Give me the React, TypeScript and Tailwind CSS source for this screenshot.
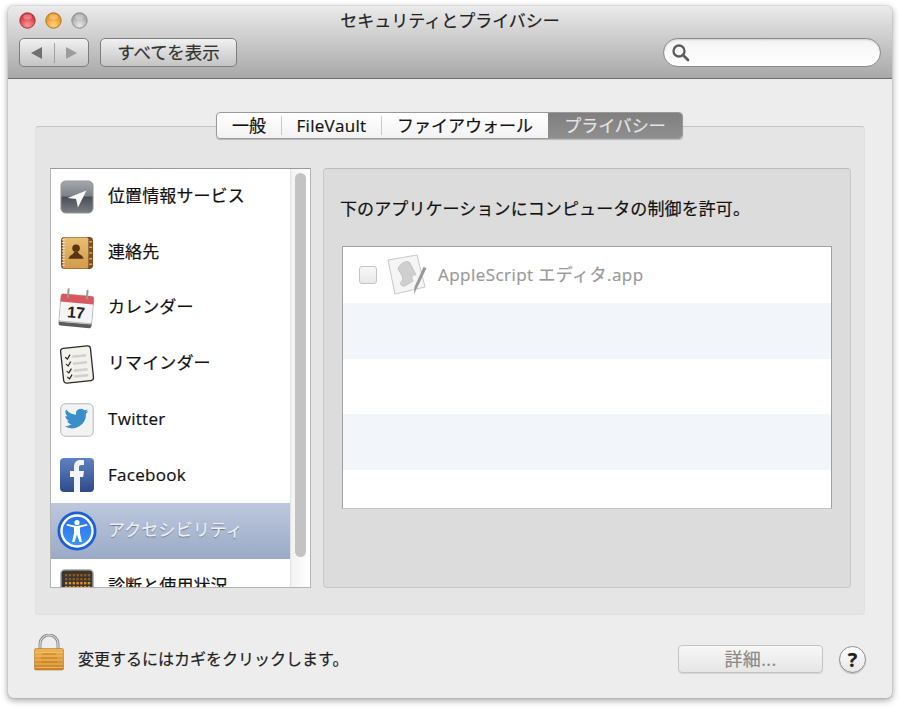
import type { ReactNode } from "react";

const font = "font-['Open_Sans','Noto_Sans_CJK_JP',sans-serif]";

function Light({ from, to, ring }: { from: string; to: string; ring: string }) {
  return (
    <svg width="17" height="17" viewBox="0 0 17 17">
      <defs>
        <radialGradient id={"l" + from.slice(1)} cx="50%" cy="80%" r="62%">
          <stop offset="0" stopColor={to} />
          <stop offset="1" stopColor={from} />
        </radialGradient>
      </defs>
      <circle cx="8.5" cy="8.5" r="7.7" fill={"url(#l" + from.slice(1) + ")"} stroke={ring} strokeWidth="1" />
      <ellipse cx="8.5" cy="4.800" rx="4.400" ry="2.600" fill="#fff" opacity=".3" />
    </svg>
  );
}

function LocationIcon() {
  return (
    <svg width="34" height="34" viewBox="0 0 36 36">
      <defs>
        <linearGradient id="loc" x1="0" y1="0" x2="0" y2="1">
          <stop offset="0" stopColor="#a4a7ac" />
          <stop offset=".47" stopColor="#7e8288" />
          <stop offset=".5" stopColor="#4a4e54" />
          <stop offset="1" stopColor="#7b7f85" />
        </linearGradient>
      </defs>
      <rect x="1" y="1" width="34" height="34" rx="5" fill="url(#loc)" stroke="#9a9a9a" />
      <path d="M28 11 L8 19 L17 20 L19 29 Z" fill="#f7f7f7" />
    </svg>
  );
}

function ContactsIcon() {
  return (
    <svg width="34" height="34" viewBox="0 0 36 36">
      <defs>
        <linearGradient id="con" x1="0" y1="0" x2="0" y2="1">
          <stop offset="0" stopColor="#e9bd74" />
          <stop offset="1" stopColor="#d39a4a" />
        </linearGradient>
      </defs>
      <rect x="1" y="1" width="34" height="34" rx="4" fill="#7b4f24" />
      <rect x="3" y="1.500" width="27" height="33" rx="2" fill="url(#con)" />
      <path d="M2 4h3M2 7h3M2 10h3M2 13h3M2 16h3M2 19h3M2 22h3M2 25h3M2 28h3M2 31h3" stroke="#eee" strokeWidth="1" />
      <path d="M31 6h3M31 12h3M31 18h3M31 24h3M31 30h3" stroke="#d9a860" strokeWidth="1.600" />
      <circle cx="17" cy="13" r="4" fill="#5a3514" />
      <path d="M9 24 C10 20 14 20 15 17 H19 C20 20 24 20 25 24 Z" fill="#5a3514" />
    </svg>
  );
}

function CalendarIcon() {
  return (
    <svg width="40" height="42" viewBox="0 0 40 42">
      <g transform="rotate(5 20 21)">
        <rect x="3" y="10" width="33" height="30" rx="2" fill="#5c5c5c" />
        <rect x="3" y="8" width="33" height="28" rx="2" fill="#f4f4f4" stroke="#aaa" strokeWidth=".5" />
        <path d="M3 35.500h33" stroke="#bbb" strokeWidth="1" />
        <path d="M3 10a2 2 0 0 1 2-2h29a2 2 0 0 1 2 2v6H3z" fill="#d9585f" />
        <path d="M10 3v8M29 3v8" stroke="#999" strokeWidth="2" strokeLinecap="round" />
        <text x="19.500" y="31" textAnchor="middle" fontSize="16" fontWeight="700" fontFamily="Liberation Sans, sans-serif" fill="#222">17</text>
      </g>
    </svg>
  );
}

function RemindersIcon() {
  const ys = [13, 20, 27, 33];
  return (
    <svg width="38" height="40" viewBox="0 0 38 40">
      <g transform="rotate(-6 19 20)">
        <rect x="4" y="3" width="30" height="35" rx="3" fill="#f2f1ea" stroke="#2a2a2a" strokeWidth="1.300" />
        {ys.map((y) => (
          <g key={y}>
            <path d={`M8 ${y - 1}l2 2 3-4`} fill="none" stroke="#222" strokeWidth="1.200" />
            <rect x="15" y={y - 2} width="14" height="2.500" fill="#d0d0d0" />
          </g>
        ))}
      </g>
    </svg>
  );
}

function TwitterIcon() {
  return (
    <svg width="34" height="34" viewBox="0 0 36 36">
      <rect x=".8" y=".8" width="34.400" height="34.400" rx="5" fill="#f2f2f2" stroke="#b4b4b4" />
      <path
        d="M30 8.500c-1 .5-2 .8-3 .9 1-.6 1.900-1.600 2.200-2.800-1 .6-2.100 1-3.200 1.200a5.200 5.200 0 0 0-8.900 4.700C12.800 12.300 9 10.200 6.400 7c-1.400 2.400-.7 5.400 1.600 7-.8 0-1.600-.2-2.300-.6 0 2.500 1.800 4.700 4.200 5.200-.8.200-1.600.2-2.400.1.700 2.100 2.600 3.600 4.900 3.600A10.500 10.500 0 0 1 4.700 24.400 14.800 14.800 0 0 0 27.500 11.300c1-.7 1.900-1.700 2.500-2.800z"
        fill="#3a8fcb"
      />
    </svg>
  );
}

function FacebookIcon() {
  return (
    <svg width="34" height="34" viewBox="0 0 34 34">
      <defs>
        <linearGradient id="fb" x1="0" y1="0" x2="0" y2="1">
          <stop offset="0" stopColor="#5f82c0" />
          <stop offset="1" stopColor="#2f4a8c" />
        </linearGradient>
      </defs>
      <rect width="34" height="34" rx="4" fill="url(#fb)" />
      <path d="M14 34V19h-4v-6h4v-4c0-4.500 2.500-7 6.500-7 1.500 0 3 .1 3.500.2V7h-2.500c-2 0-2.500 1-2.500 2.500V13h5l-.8 6H20v15z" fill="#f2f4f8" />
    </svg>
  );
}

function AccessIcon() {
  return (
    <svg width="40" height="40" viewBox="0 0 40 40">
      <defs>
        <linearGradient id="acc" x1="0" y1="0" x2="0" y2="1">
          <stop offset="0" stopColor="#2a6fe8" />
          <stop offset="1" stopColor="#3a96f7" />
        </linearGradient>
      </defs>
      <circle cx="20" cy="20" r="19.500" fill="#1c5fd0" />
      <circle cx="20" cy="20" r="15.500" fill="url(#acc)" stroke="#fff" strokeWidth="2.400" />
      <circle cx="20" cy="11.500" r="2.600" fill="#fff" />
      <path d="M9.500 14.500 L17 16.500 V22 L15 31 H17.500 L20 23.500 L22.500 31 H25 L23 22 V16.500 L30.500 14.500 L30 13 L20 15 L10 13 Z" fill="#fff" />
    </svg>
  );
}

function DiagIcon() {
  const cells = [];
  for (let r = 0; r < 5; r++) {
    for (let c = 0; c < 7; c++) {
      cells.push(<rect key={r + "-" + c} x={5 + c * 3.800} y={5 + r * 4} width="2.400" height="2.400" fill={r > 1 ? "#e0921e" : "#8a5a1e"} />);
    }
  }
  return (
    <svg width="34" height="36" viewBox="0 0 34 36">
      <rect x=".8" y=".8" width="32.400" height="34.400" rx="4" fill="#3a3530" stroke="#b8b8b8" strokeWidth="1.500" />
      {cells}
    </svg>
  );
}

function ScriptIcon() {
  return (
    <svg width="42" height="42" viewBox="0 0 42 42">
      <path d="M1 6 L30 1 L38 33 L8 40 Z" fill="#f5f5f5" stroke="#c8c8c8" />
      <path d="M11 15 C12 10 20 5 23 9 L29 21 C25 20 24 24 26 27 L18 32 C14 33 12 29 15 27 C17 24 14 20 11 15 Z" fill="#cfcfcf" stroke="#b0b0b0" strokeWidth=".6" />
      <path d="M39.500 14 L32 30 L27 40 L27.500 33 L36.500 13 Z" fill="#989898" />
    </svg>
  );
}

function LockIcon() {
  return (
    <svg width="30" height="37" viewBox="0 0 30 37">
      <defs>
        <linearGradient id="lk" x1="0" y1="0" x2="0" y2="1">
          <stop offset="0" stopColor="#f3b450" />
          <stop offset="1" stopColor="#c9811f" />
        </linearGradient>
      </defs>
      <path d="M6 15 V10 a9 9 0 0 1 18 0 V15" fill="none" stroke="#8f8f8f" strokeWidth="3" />
      <path d="M6 15 V10 a9 9 0 0 1 18 0 V15" fill="none" stroke="#e4e4e4" strokeWidth="1" />
      <rect x=".5" y="14.500" width="29" height="21.500" rx="1.500" fill="url(#lk)" stroke="#a87a3a" strokeWidth=".6" />
      <path d="M1 18.500h28M1 22h28M1 26h28M1 30h28M1 33.500h28" stroke="#f6c878" strokeWidth=".8" opacity=".9" />
      <path d="M8 20h14M7 24h16M7 28h16" stroke="#b87820" strokeWidth=".8" />
    </svg>
  );
}

const rows: { icon: ReactNode; label: string; latin?: boolean; selected?: boolean }[] = [
  { icon: <LocationIcon />, label: "位置情報サービス" },
  { icon: <ContactsIcon />, label: "連絡先" },
  { icon: <CalendarIcon />, label: "カレンダー" },
  { icon: <RemindersIcon />, label: "リマインダー" },
  { icon: <TwitterIcon />, label: "Twitter", latin: true },
  { icon: <FacebookIcon />, label: "Facebook", latin: true },
  { icon: <AccessIcon />, label: "アクセシビリティ", selected: true },
  { icon: <DiagIcon />, label: "診断と使用状況" },
];

const tabBtn = "my-[3px] flex items-center justify-center border-r border-[#c8c8c8] text-[17px] leading-[19px] text-[#111]";

export default function App() {
  return (
    <div className={`h-[708px] w-[900px] overflow-hidden bg-white pl-2 pt-[6px] [-webkit-text-stroke:0.2px] ${font}`}>
      <div className="flex h-[692px] w-[884px] flex-col overflow-hidden rounded-[5px] bg-[#ededed] shadow-[0_0_1px_#777,0_2px_7px_rgba(0,0,0,0.4)]">
        {/* title bar */}
        <div className="h-[73px] shrink-0 border-b border-[#6e6e6e] bg-gradient-to-b from-[#ebebeb] to-[#a8a8a8] px-[11px]">
          <div className="flex h-[32px] items-center pb-[3px]">
            <div className="flex w-[78px] gap-[9px]">
              <Light from="#d9323c" to="#ff9aa0" ring="#9b3a40" />
              <Light from="#e8951e" to="#ffd27a" ring="#a9752c" />
              <Light from="#a5a5a5" to="#e8e8e8" ring="#8c8c8c" />
            </div>
            <div className="flex-1 pr-[78px] text-center text-[17px] leading-[24px] text-[#222]">セキュリティとプライバシー</div>
          </div>
          <div className="flex items-center">
            <div className="flex h-[29px] w-[70px] items-center rounded-[5px] border border-[#7d7d7d] bg-gradient-to-b from-[#f1f1f1] to-[#c4c4c4]">
              <div className="flex flex-1 justify-center border-r border-[#a0a0a0] py-[3px]">
                <svg width="13" height="14" viewBox="0 0 13 14"><path d="M12 1 V13 L1 7 Z" fill="#707070" /></svg>
              </div>
              <div className="flex flex-1 justify-center py-[3px]">
                <svg width="13" height="14" viewBox="0 0 13 14"><path d="M1 1 V13 L12 7 Z" fill="#9c9c9c" /></svg>
              </div>
            </div>
            <div className="ml-[11px] flex h-[29px] w-[137px] items-center justify-center rounded-[5px] border border-[#7d7d7d] bg-gradient-to-b from-[#f1f1f1] to-[#c4c4c4] text-[17.500px] text-[#333]">
              すべてを表示
            </div>
            <div className="ml-auto flex h-[29px] w-[218px] items-center rounded-full border border-[#8a8a8a] bg-gradient-to-b from-[#f4f4f4] to-white pl-[7px] shadow-[inset_0_1px_2px_rgba(0,0,0,0.15)]">
              <svg width="19" height="19" viewBox="0 0 19 19">
                <circle cx="8" cy="8" r="5.500" fill="none" stroke="#5c5c5c" strokeWidth="2.300" />
                <path d="M12 12 L17 17" stroke="#5c5c5c" strokeWidth="2.800" strokeLinecap="round" />
              </svg>
            </div>
          </div>
        </div>

        {/* tabs */}
        <div className="relative z-10 ml-[208px] mt-[33px] flex h-[27px] w-[467px] overflow-hidden rounded-[4px] border border-[#9a9a9a] bg-gradient-to-b from-white to-[#f2f2f2] shadow-[0_1px_1px_rgba(0,0,0,0.2)]">
          <div className={`${tabBtn} w-[65px]`}>一般</div>
          <div className={`${tabBtn} w-[100px] tracking-[0.3px]`}>FileVault</div>
          <div className={`${tabBtn} w-[166px] border-r-0`}>ファイアウォール</div>
          <div className="flex h-full flex-1 items-center justify-center bg-gradient-to-b from-[#7f7f7f] to-[#8f8f8f] text-[17px] leading-[19px] text-[#e4e4e4]">プライバシー</div>
        </div>

        {/* panel */}
        <div className="mx-[27px] -mt-[13px] flex h-[489px] gap-[12px] rounded-[4px] border border-t-[#c4c4c4] border-x-[#e0e0e0] border-b-[#e0e0e0] bg-[#e5e5e5] pl-[14px] pr-[13px] pt-[41px]">
          <div className="flex h-[420px] w-[261px] overflow-hidden border border-[#b4b4b4] border-t-[#999] bg-white">
            <div className="h-full w-[239px] shrink-0 overflow-hidden">
              {rows.map((r) => (
                <div
                  key={r.label}
                  className={`flex h-[55.700px] items-center ${r.selected ? "bg-gradient-to-b from-[#bdc8de] to-[#9aaac6]" : ""}`}
                >
                  <div className="flex w-[52px] shrink-0 justify-center">{r.icon}</div>
                  <span
                    className={`ml-[5px] pb-[2px] text-[17px] ${r.latin ? "tracking-[0.3px]" : "tracking-[0.1px]"} ${r.selected ? "text-[#eef1f6] [text-shadow:0_1px_1px_rgba(60,70,100,0.6)]" : "text-[#111]"}`}
                  >
                    {r.label}
                  </span>
                </div>
              ))}
            </div>
            <div className="h-full flex-1 border-l border-[#e2e2e2] bg-gradient-to-r from-[#f2f2f2] to-white pl-[4px] pt-[4px]">
              <div className="h-[384px] w-[11px] rounded-full bg-[#c3c3c3]" />
            </div>
          </div>
          <div className="flex h-[420px] flex-1 flex-col rounded-[4px] border border-[#c8c8c8] border-t-[#bbb] bg-[#dcdcdc] px-[18px]">
            <p className="-ml-[2px] mt-[27px] whitespace-nowrap text-[17px] leading-[26px] tracking-[0.1px] text-[#111]">下のアプリケーションにコンピュータの制御を許可。</p>
            <div className="mt-[24px] h-[263px] border border-[#a0a0a0] border-b-[#c4c4c4] bg-white">
              <div className="flex h-[55.800px] items-center pl-[16px]">
                <div className="h-[18px] w-[18px] rounded-[3px] border border-[#c6c6c6] bg-gradient-to-b from-[#f8f8f8] to-[#e8e8e8]" />
                <div className="ml-[10px] w-[42px]"><ScriptIcon /></div>
                <span className="ml-[9px] text-[17px] tracking-[0.45px] text-[#999]">AppleScript エディタ.app</span>
              </div>
              <div className="h-[55.800px] bg-[#f2f5fa]" />
              <div className="h-[55.800px]" />
              <div className="h-[55.800px] bg-[#f2f5fa]" />
            </div>
          </div>
        </div>

        {/* footer */}
        <div className="flex flex-1 items-start pl-[26px]">
          <div className="mt-[19px]"><LockIcon /></div>
          <div className="ml-[14px] mt-[32px] text-[16px] leading-[24px] text-[#222]">変更するにはカギをクリックします。</div>
          <div className="ml-auto mt-[30px] flex h-[28px] w-[145px] items-center justify-center rounded-[4px] border border-[#c4c4c4] bg-gradient-to-b from-[#f7f7f7] to-[#e6e6e6] text-[18px] tracking-[0.4px] text-[#8a8a8a] shadow-[0_1px_1px_rgba(0,0,0,0.1)]">
            詳細...
          </div>
          <div className="ml-[16px] mr-[26px] mt-[31px] flex h-[27px] w-[27px] items-center justify-center rounded-full border border-[#8c8c8c] bg-gradient-to-b from-white to-[#e6e6e6] text-[20px] font-bold text-[#222] shadow-[0_1px_1px_rgba(0,0,0,0.2)]">
            ?
          </div>
        </div>
      </div>
    </div>
  );
}
